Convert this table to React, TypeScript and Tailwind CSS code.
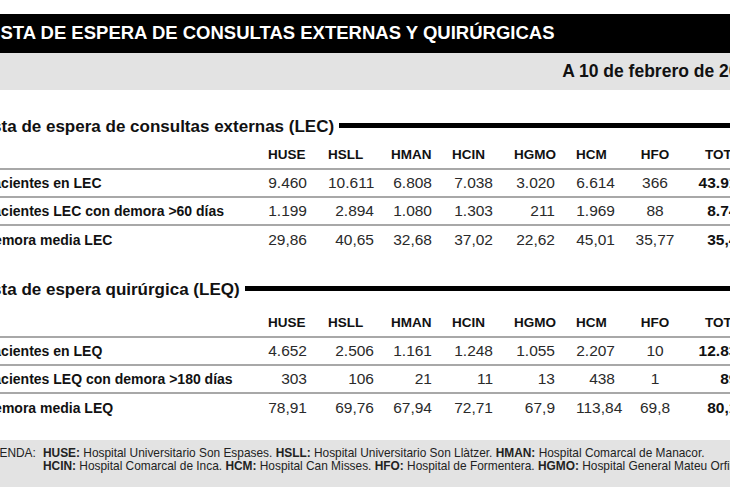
import React from 'react';

interface Row {
  label: string;
  values: string[];
  total: string;
}

const hospitals = ['HUSE', 'HSLL', 'HMAN', 'HCIN', 'HGMO', 'HCM', 'HFO'];

const lecRows: Row[] = [
  { label: 'Pacientes en LEC', values: ['9.460', '10.611', '6.808', '7.038', '3.020', '6.614', '366'], total: '43.917' },
  { label: 'Pacientes LEC con demora >60 días', values: ['1.199', '2.894', '1.080', '1.303', '211', '1.969', '88'], total: '8.744' },
  { label: 'Demora media LEC', values: ['29,86', '40,65', '32,68', '37,02', '22,62', '45,01', '35,77'], total: '35,49' },
];

const leqRows: Row[] = [
  { label: 'Pacientes en LEQ', values: ['4.652', '2.506', '1.161', '1.248', '1.055', '2.207', '10'], total: '12.839' },
  { label: 'Pacientes LEQ con demora >180 días', values: ['303', '106', '21', '11', '13', '438', '1'], total: '893' },
  { label: 'Demora media LEQ', values: ['78,91', '69,76', '67,94', '72,71', '67,9', '113,84', '69,8'], total: '80,12' },
];

// padding that puts each value's right edge where the print has it
const valueCls = [
  'text-right pr-[21px]',
  'text-right pr-[17px]',
  'text-right pr-[20px]',
  'text-right pr-[21px]',
  'text-right pr-[21px]',
  'text-right pr-[15px]',
  'text-center',
];

const headCls = ['text-left', 'text-left', 'text-left', 'text-left', 'text-left', 'text-left', 'text-center'];

const gridCols = 'grid grid-cols-[292px_60px_63px_61px_62px_62px_54px_50px_1fr]';

const Section = ({ title, rows, headRowCls }: { title: string; rows: Row[]; headRowCls: string }) => (
  <div>
    <div className="flex items-center h-[20px] pl-[1px]">
      <h2 className="text-[17px] font-bold text-[#111] whitespace-nowrap leading-none">{title}</h2>
      <div className="flex-1 h-[5px] bg-black ml-[5px] mt-[-2px]" />
    </div>

    <div className={`${gridCols} items-end border-b-2 border-[#a8a8a8] ${headRowCls}`}>
      <div />
      {hospitals.map((h, i) => (
        <div key={h} className={`text-[13.5px] font-bold text-[#111] leading-[16px] ${headCls[i]}`}>
          {h}
        </div>
      ))}
      <div className="text-[13.5px] font-bold text-[#111] leading-[16px] pl-[25px]">TOTAL</div>
    </div>

    {rows.map((row, r) => (
      <div
        key={row.label}
        className={`${gridCols} items-center h-[28px] ${r < rows.length - 1 ? 'border-b-2 border-[#a8a8a8]' : ''}`}
      >
        <div className="pl-[8px] text-[14px] font-bold text-[#111] whitespace-nowrap">{row.label}</div>
        {row.values.map((v, i) => (
          <div key={i} className={`text-[15.5px] text-[#2a2a2a] whitespace-nowrap ${valueCls[i]}`}>
            {v}
          </div>
        ))}
        <div className="text-right pr-[14px] text-[15.5px] font-bold text-[#111]">{row.total}</div>
      </div>
    ))}
  </div>
);

export default function App() {
  return (
    <div className="w-[730px] h-[500px] bg-white overflow-hidden font-['Liberation_Sans',Arial,sans-serif]">
      <div className="w-[784px] ml-[-24px] pt-[14px]">
        <div className="h-[39px] bg-black flex items-center pl-[8px]">
          <h1 className="text-white text-[18.5px] font-bold whitespace-nowrap leading-none">
            LISTA DE ESPERA DE CONSULTAS EXTERNAS Y QUIRÚRGICAS
          </h1>
        </div>
        <div className="h-[37px] bg-[#e3e3e3] flex items-center justify-end pr-[2px]">
          <span className="text-[17.5px] font-bold text-[#111] whitespace-nowrap">A 10 de febrero de 2020</span>
        </div>

        <div className="mt-[26px]">
          <Section title="Lista de espera de consultas externas (LEC)" rows={lecRows} headRowCls="h-[34px] pb-[5px]" />
        </div>

        <div className="mt-[25px]">
          <Section title="Lista de espera quirúrgica (LEQ)" rows={leqRows} headRowCls="h-[39px] pb-[5px]" />
        </div>

        <div className="mt-[18px] bg-[#e3e3e3] h-[47px] pt-[7px] flex text-[11.9px] leading-[12.5px] text-[#222]">
          <div className="w-[67px] pl-[1px] shrink-0">LEYENDA:</div>
          <div className="whitespace-nowrap">
            <div>
              <b>HUSE:</b> Hospital Universitario Son Espases. <b>HSLL:</b> Hospital Universitario Son Llàtzer.{' '}
              <b>HMAN:</b> Hospital Comarcal de Manacor.
            </div>
            <div>
              <b>HCIN:</b> Hospital Comarcal de Inca. <b>HCM:</b> Hospital Can Misses. <b>HFO:</b> Hospital de
              Formentera. <b>HGMO:</b> Hospital General Mateu Orfila.
            </div>
          </div>
        </div>
      </div>
    </div>
  );
}
